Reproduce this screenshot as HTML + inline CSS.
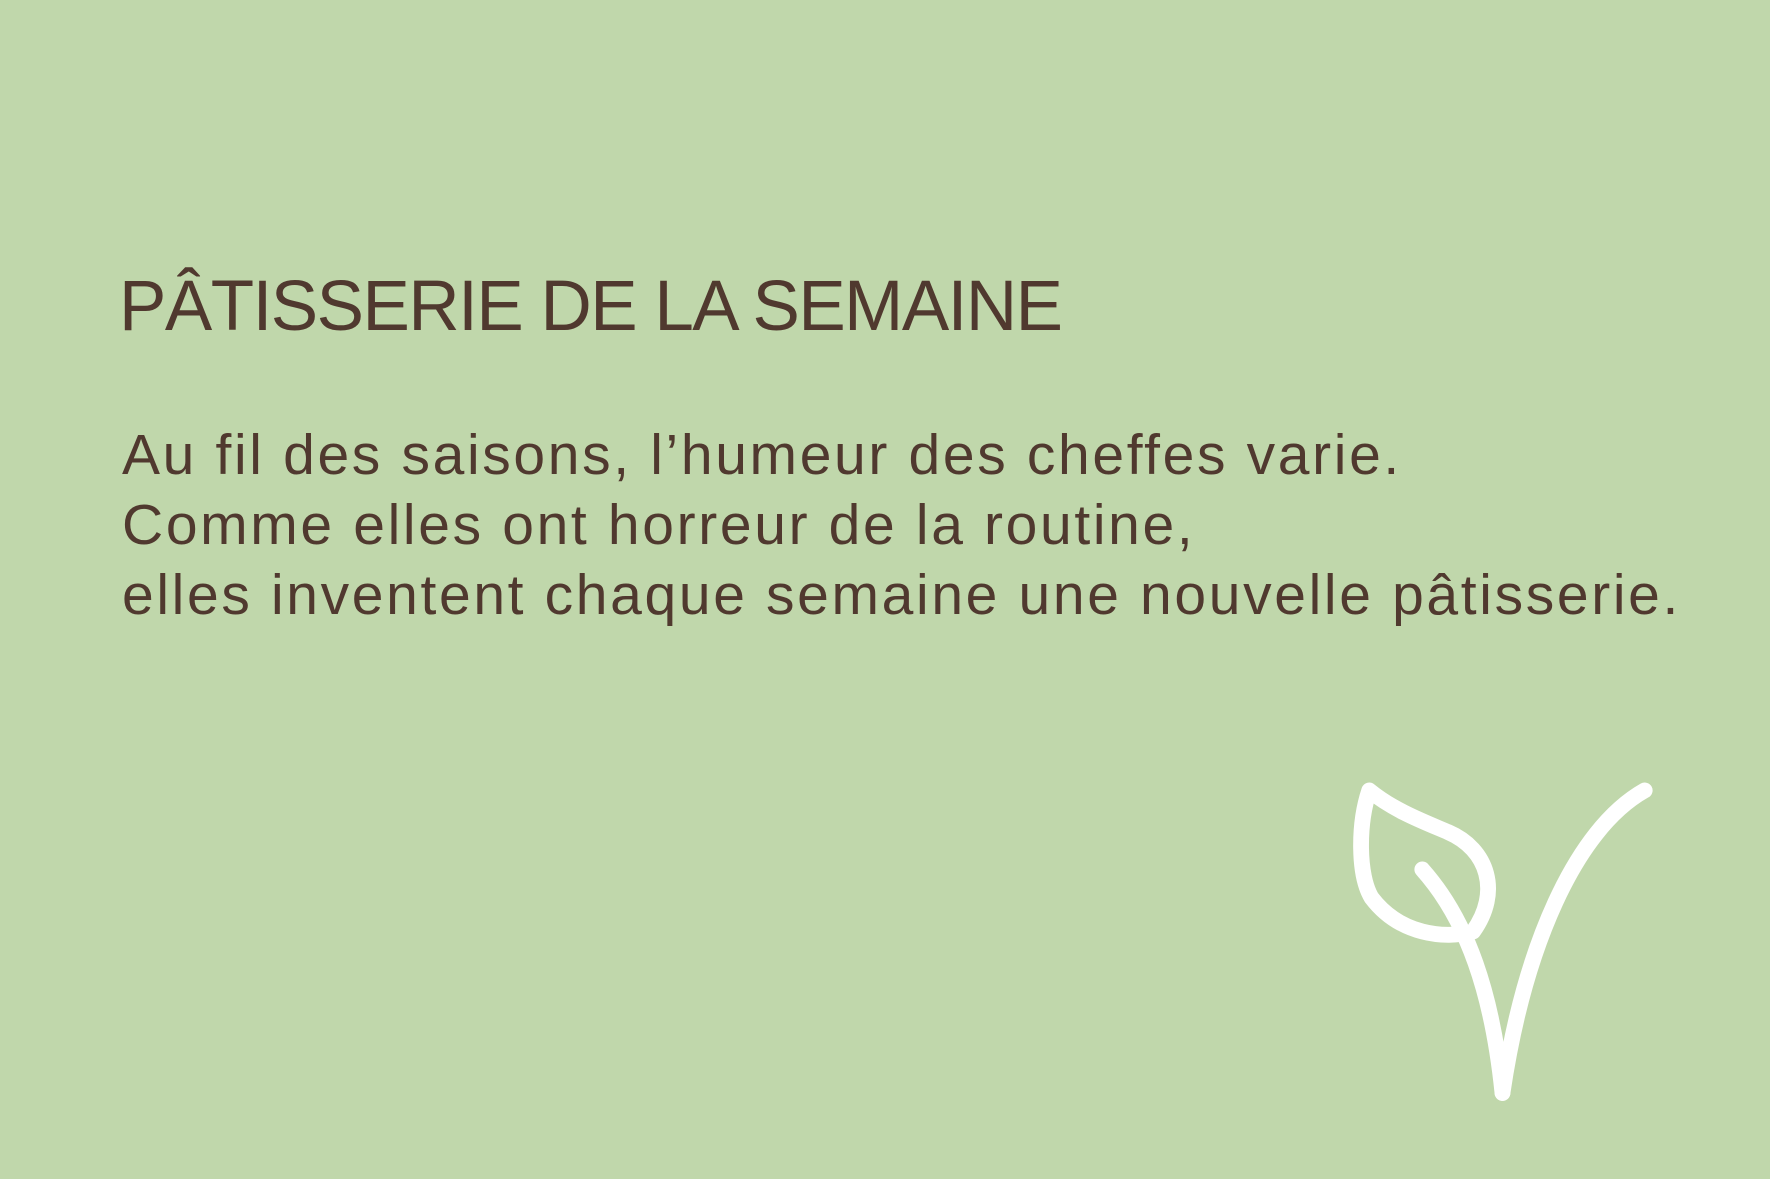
<!DOCTYPE html>
<html><head><meta charset="utf-8"><style>
html,body{margin:0;padding:0}
body{width:1770px;height:1179px;background:#c0d7ab;position:relative;overflow:hidden;font-family:"Liberation Sans",sans-serif;color:#50392f}
h1{position:absolute;left:119px;top:262px;margin:0;font-weight:normal;font-size:71px;line-height:90px;letter-spacing:-1.5px;white-space:nowrap}
p{position:absolute;left:122px;top:420px;margin:0;font-size:57px;line-height:70px;letter-spacing:2.65px;white-space:nowrap}
svg{position:absolute;left:0;top:0}
</style></head><body>
<h1>PÂTISSERIE DE LA SEMAINE</h1>
<p>Au fil des saisons, l’humeur des cheffes varie.<br>Comme elles ont horreur de la routine,<br>elles inventent chaque semaine une nouvelle pâtisserie.</p>
<svg width="1770" height="1179" viewBox="0 0 1568 1044">
<g fill="none" stroke="#fff" stroke-width="14" stroke-linecap="round" stroke-linejoin="round">
<path d="M1213,700 C1235,718 1262,728 1283,737 C1318,752 1330,790 1305,825 C1280,832 1240,828 1215,795 C1203,775 1203,730 1213,700 Z"/>
<path d="M1260,770 C1300,815 1322,880 1331,968"/>
<path d="M1457,700 C1395,735 1350,840 1331,968"/>
</g></svg>
</body></html>
